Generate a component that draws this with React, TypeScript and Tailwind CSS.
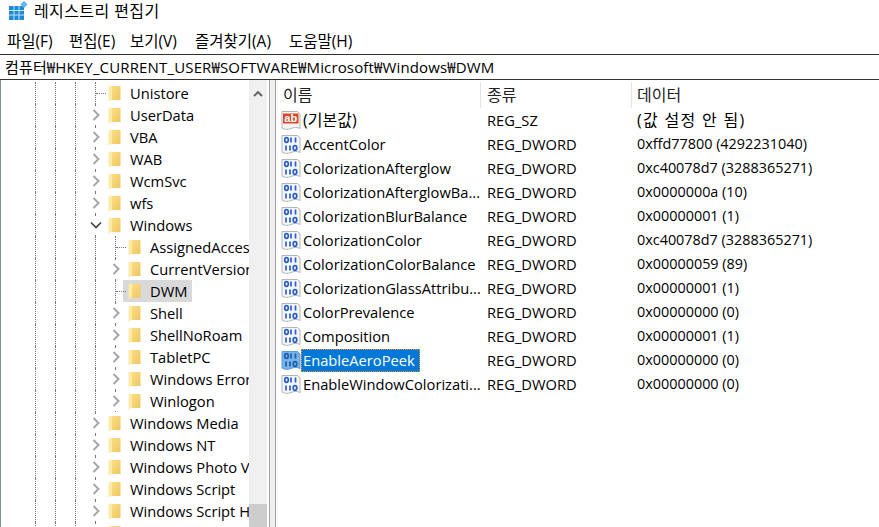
const FONT = "font-['Open_Sans','Noto_Sans_CJK_KR',sans-serif]";

type TreeRow = { name: string; level: 0 | 1; kind: "closed" | "open" | "leaf"; selected?: boolean };

const treeRows: TreeRow[] = [
  { name: "Unistore", level: 0, kind: "leaf" },
  { name: "UserData", level: 0, kind: "closed" },
  { name: "VBA", level: 0, kind: "closed" },
  { name: "WAB", level: 0, kind: "closed" },
  { name: "WcmSvc", level: 0, kind: "closed" },
  { name: "wfs", level: 0, kind: "closed" },
  { name: "Windows", level: 0, kind: "open" },
  { name: "AssignedAccessConfiguration", level: 1, kind: "leaf" },
  { name: "CurrentVersion", level: 1, kind: "closed" },
  { name: "DWM", level: 1, kind: "leaf", selected: true },
  { name: "Shell", level: 1, kind: "closed" },
  { name: "ShellNoRoam", level: 1, kind: "closed" },
  { name: "TabletPC", level: 1, kind: "closed" },
  { name: "Windows Error Reporting", level: 1, kind: "closed" },
  { name: "Winlogon", level: 1, kind: "closed" },
  { name: "Windows Media", level: 0, kind: "closed" },
  { name: "Windows NT", level: 0, kind: "closed" },
  { name: "Windows Photo Viewer", level: 0, kind: "closed" },
  { name: "Windows Script", level: 0, kind: "closed" },
  { name: "Windows Script Host", level: 0, kind: "closed" },
  { name: "Windows Search", level: 0, kind: "closed" },
];

const values = [
  { name: "(기본값)", type: "REG_SZ", data: "(값 설정 안 됨)", sz: true },
  { name: "AccentColor", type: "REG_DWORD", data: "0xffd77800 (4292231040)" },
  { name: "ColorizationAfterglow", type: "REG_DWORD", data: "0xc40078d7 (3288365271)" },
  { name: "ColorizationAfterglowBa...", type: "REG_DWORD", data: "0x0000000a (10)" },
  { name: "ColorizationBlurBalance", type: "REG_DWORD", data: "0x00000001 (1)" },
  { name: "ColorizationColor", type: "REG_DWORD", data: "0xc40078d7 (3288365271)" },
  { name: "ColorizationColorBalance", type: "REG_DWORD", data: "0x00000059 (89)" },
  { name: "ColorizationGlassAttribu...", type: "REG_DWORD", data: "0x00000001 (1)" },
  { name: "ColorPrevalence", type: "REG_DWORD", data: "0x00000000 (0)" },
  { name: "Composition", type: "REG_DWORD", data: "0x00000001 (1)" },
  { name: "EnableAeroPeek", type: "REG_DWORD", data: "0x00000000 (0)", selected: true },
  { name: "EnableWindowColorizati...", type: "REG_DWORD", data: "0x00000000 (0)" },
];

function AppIcon() {
  return (
    <svg width="20" height="20" viewBox="0 0 20 20" className="shrink-0">
      <rect x="1" y="5" width="15" height="14" fill="#1f8ad2" />
      <path d="M1 9.500h15M1 14h15M6 5v14M11 5v14" stroke="#bfe3f7" strokeWidth="1" />
      <rect x="13.500" y="1" width="5" height="5" fill="#5bb8ea" transform="rotate(45 16 3.500)" />
    </svg>
  );
}

function Folder() {
  return (
    <svg width="13" height="17" viewBox="0 0 13 17" className="shrink-0">
      <defs>
        <linearGradient id="folderFill" x1="0" y1="0" x2="1" y2="1">
          <stop offset="0" stopColor="#fbdf8a" />
          <stop offset="1" stopColor="#f0c65e" />
        </linearGradient>
      </defs>
      <path d="M3 1h9.500v14H3z" fill="url(#folderFill)" />
      <path d="M.5 1.500 4 .5v14l-3.500 2z" fill="#fdeaa6" />
    </svg>
  );
}

function Chevron({ open, scroll }: { open?: boolean; scroll?: boolean }) {
  if (scroll) {
    return (
      <svg width="10" height="7" viewBox="0 0 10 7">
        <path d="M1 6l4-4 4 4" fill="none" stroke="#606060" strokeWidth="1.800" />
      </svg>
    );
  }
  return (
    <svg width="14" height="18" viewBox="0 0 14 18" className="bg-white">
      {open ? (
        <path d="M2 6.500l5 5 5-5" fill="none" stroke="#404040" strokeWidth="1.600" />
      ) : (
        <path d="M4.500 4l5 5-5 5" fill="none" stroke="#a6a6a6" strokeWidth="2" />
      )}
    </svg>
  );
}

function Connector({ row }: { row: TreeRow }) {
  return (
    <div className="relative w-3 h-full shrink-0 border-l border-dotted border-[#777]">
      {row.kind === "leaf" ? (
        <div className="absolute left-0 top-[11px] w-[10px] border-t border-dotted border-[#777]" />
      ) : (
        <div className="absolute left-[-7px] top-[2px]">
          <Chevron open={row.kind === "open"} />
        </div>
      )}
    </div>
  );
}

function TreeItem({ row }: { row: TreeRow }) {
  return (
    <div className="flex h-[22px] shrink-0 items-center pl-[34px] whitespace-nowrap">
      <div className="w-5 h-full shrink-0 border-l border-dotted border-[#777]" />
      <div className="w-5 h-full shrink-0 border-l border-dotted border-[#777]" />
      <div className="w-5 h-full shrink-0 border-l border-dotted border-[#777]" />
      {row.level === 1 && <div className="w-5 h-full shrink-0 border-l border-dotted border-[#777]" />}
      <Connector row={row} />
      <div className={`flex h-full items-center pl-[1px] pr-[5px] ${row.selected ? "bg-[#d9d9d9] ml-[-4px] pl-[5px]" : ""}`}>
        <Folder />
        <span className="ml-[9px] text-[14.700px] text-black">{row.name}</span>
      </div>
    </div>
  );
}

function ValueIcon({ sz, selected }: { sz?: boolean; selected?: boolean }) {
  return (
    <svg width="20" height="20" viewBox="0 0 20 20" className="shrink-0">
      <path
        d="M1 1.500h15.500l2.500 2.500v14.500c-3-1.500-5.500-1.500-9 0s-6 1-9-.5z"
        fill={selected ? "#79b4e8" : "#f6f6f6"}
        stroke={selected ? "#5b9bd8" : "#b4b4b4"}
      />
      {sz ? (
        <>
          <rect x="2" y="3.500" width="15.500" height="10" fill="#d9482b" />
          <text x="9.700" y="12" textAnchor="middle" fontSize="11" fontWeight="700" fill="#fff" fontFamily="Liberation Sans">ab</text>
        </>
      ) : (
        <g fill="none" stroke={selected ? "#1c5fb0" : "#2a5fc9"} strokeWidth="1.700">
          <ellipse cx="5.500" cy="6" rx="1.800" ry="2.300" />
          <path d="M10 3.500v5" />
          <path d="M14.500 3.500v5" />
          <path d="M5 11.500v5" />
          <path d="M9 11.500v5" />
          <ellipse cx="14" cy="14" rx="1.800" ry="2.300" />
        </g>
      )}
    </svg>
  );
}

export default function App() {
  return (
    <div className={`h-[527px] w-[879px] overflow-hidden bg-white text-[14.700px] leading-none text-black ${FONT}`}>
      <div className="flex h-[21px] items-center gap-[6px] pl-[8px] pt-[1px]">
        <AppIcon />
        <span className="text-[16px] tracking-[0.4px]">레지스트리 편집기</span>
      </div>

      <div className="flex h-[33px] items-center pl-[7px] pt-[8px] text-[15.500px]">
        <span className="w-[62px]">파일(F)</span>
        <span className="w-[61px]">편집(E)</span>
        <span className="w-[65px]">보기(V)</span>
        <span className="w-[94px]">즐겨찾기(A)</span>
        <span>도움말(H)</span>
      </div>

      <div className="flex h-[26px] items-center border-y border-[#333] pl-[5px] text-[15px] tracking-[0.15px]">
        컴퓨터₩HKEY_CURRENT_USER₩SOFTWARE₩Microsoft₩Windows₩DWM
      </div>

      <div className="flex h-[447px] border-l border-[#828d99]">
        <div className="flex w-[248px] flex-col overflow-hidden pt-[2px]">
          {treeRows.map((row) => (
            <TreeItem key={row.name} row={row} />
          ))}
        </div>

        <div className="flex w-[18px] shrink-0 flex-col justify-between bg-[#f0f0f0] pt-[2px]">
          <div className="flex h-[22px] items-center justify-center">
            <Chevron scroll />
          </div>
          <div className="h-[23px] bg-[#cdcdcd]" />
        </div>

        <div className="ml-[2px] w-[1px] bg-[#a0a0a0]" />
        <div className="w-[5px] bg-[#f0f0f0]" />
        <div className="w-[1px] bg-[#a0a0a0]" />

        <div className="flex-1 pt-[2px]">
          <div className="flex h-[26px] items-center text-[16px] text-[#222]">
            <div className="flex h-full w-[205px] items-center border-r border-[#e5e5e5] pl-[7px]">이름</div>
            <div className="flex h-full w-[151px] items-center border-r border-[#e5e5e5] pl-[6px]">종류</div>
            <div className="flex h-full items-center pl-[5px]">데이터</div>
          </div>
          {values.map((v) => (
            <div key={v.name} className="flex h-[24px] items-center whitespace-nowrap">
              <div className="flex w-[211px] items-center pl-[5px]">
                <ValueIcon sz={v.sz} selected={v.selected} />
                <span
                  className={
                    v.selected
                      ? "flex h-[23px] items-center border border-dotted border-[#e8912d] bg-[#0078d7] pl-[1px] pr-[4px] text-white"
                      : `ml-[2px] ${v.sz ? "text-[16px]" : ""}`
                  }
                >
                  {v.name}
                </span>
              </div>
              <div className="w-[150px]">{v.type}</div>
              <div className={v.sz ? "text-[16px] tracking-[1.300px]" : "text-[14.400px]"}>{v.data}</div>
            </div>
          ))}
        </div>
      </div>
    </div>
  );
}
